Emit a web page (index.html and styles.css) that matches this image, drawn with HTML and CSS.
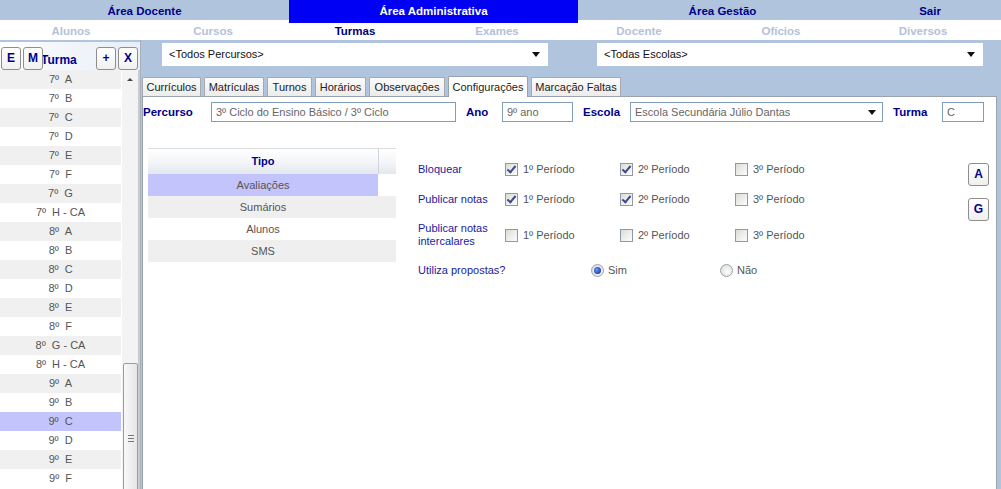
FILE: index.html
```html
<!DOCTYPE html>
<html lang="pt">
<head>
<meta charset="utf-8">
<title>Turmas - Configurações</title>
<link rel="stylesheet" href="styles.css">
</head>
<body>
<div class="nav1">
  <div class="n1">Área Docente</div>
  <div class="n1 active">Área Administrativa</div>
  <div class="n1">Área Gestão</div>
  <div class="n1">Sair</div>
</div>
<div class="nav2">
  <div class="n2">Alunos</div>
  <div class="n2">Cursos</div>
  <div class="n2 cur">Turmas</div>
  <div class="n2">Exames</div>
  <div class="n2">Docente</div>
  <div class="n2">Ofícios</div>
  <div class="n2">Diversos</div>
</div>
<div class="main">
  <aside class="side">
    <div class="side-head">
      <span class="sbtn">E</span><span class="sbtn m">M</span><span class="side-title">Turma</span>
      <span class="sbtn plus">+</span><span class="sbtn">X</span>
    </div>
    <div class="side-body">
      <ul class="list">
        <li>7º&nbsp; A</li><li>7º&nbsp; B</li><li>7º&nbsp; C</li><li>7º&nbsp; D</li>
        <li>7º&nbsp; E</li><li>7º&nbsp; F</li><li>7º&nbsp; G</li><li>7º&nbsp; H - CA</li>
        <li>8º&nbsp; A</li><li>8º&nbsp; B</li><li>8º&nbsp; C</li><li>8º&nbsp; D</li>
        <li>8º&nbsp; E</li><li>8º&nbsp; F</li><li>8º&nbsp; G - CA</li><li>8º&nbsp; H - CA</li>
        <li>9º&nbsp; A</li><li>9º&nbsp; B</li><li class="sel-row">9º&nbsp; C</li><li>9º&nbsp; D</li>
        <li>9º&nbsp; E</li><li>9º&nbsp; F</li>
      </ul>
      <div class="vscroll">
        <div class="arrow-up"></div>
        <div class="thumb"><span class="grip"></span></div>
      </div>
    </div>
  </aside>
  <section class="content">
    <div class="filters">
      <div class="fsel">&lt;Todos Percursos&gt;<span class="caret"></span></div>
      <div class="fsel">&lt;Todas Escolas&gt;<span class="caret"></span></div>
    </div>
    <div class="tabs">
      <div class="tab t1">Currículos</div>
      <div class="tab t2">Matrículas</div>
      <div class="tab t3">Turnos</div>
      <div class="tab t4">Horários</div>
      <div class="tab t5">Observações</div>
      <div class="tab t6 active">Configurações</div>
      <div class="tab t7">Marcação Faltas</div>
    </div>
    <div class="panel">
      <div class="form-row">
        <span class="flbl">Percurso</span>
        <span class="finput">3º Ciclo do Ensino Básico / 3º Ciclo</span>
        <span class="flbl pad">Ano</span>
        <span class="finput">9º ano</span>
        <span class="flbl pad">Escola</span>
        <span class="finput">Escola Secundária Júlio Dantas<span class="caret"></span></span>
        <span class="flbl pad">Turma</span>
        <span class="finput">C</span>
      </div>
      <div class="cfg-area">
        <div class="tipo">
          <div class="tipo-head"><span class="th1">Tipo</span><span class="th2"></span></div>
          <div class="trow"><span class="tc selected">Avaliações</span><span class="tc2"></span></div>
          <div class="trow alt"><span class="tc">Sumários</span><span class="tc2"></span></div>
          <div class="trow"><span class="tc">Alunos</span><span class="tc2"></span></div>
          <div class="trow alt"><span class="tc">SMS</span><span class="tc2"></span></div>
        </div>
        <div class="cfg">
          <div class="crow r1">
            <span class="clbl">Bloquear</span>
            <span class="opt"><span class="cb on"></span>1º Período</span>
            <span class="opt"><span class="cb on"></span>2º Período</span>
            <span class="opt"><span class="cb"></span>3º Período</span>
          </div>
          <div class="crow r2">
            <span class="clbl">Publicar notas</span>
            <span class="opt"><span class="cb on"></span>1º Período</span>
            <span class="opt"><span class="cb on"></span>2º Período</span>
            <span class="opt"><span class="cb"></span>3º Período</span>
          </div>
          <div class="crow r3">
            <span class="clbl">Publicar notas intercalares</span>
            <span class="opt"><span class="cb"></span>1º Período</span>
            <span class="opt"><span class="cb"></span>2º Período</span>
            <span class="opt"><span class="cb"></span>3º Período</span>
          </div>
          <div class="rrow">
            <span class="rlbl">Utiliza propostas?</span>
            <span class="ropt"><span class="rb on"></span>Sim</span>
            <span class="ropt"><span class="rb"></span>Não</span>
          </div>
        </div>
        <div class="ag">
          <span class="abtn">A</span>
          <span class="abtn">G</span>
        </div>
      </div>
    </div>
  </section>
</div>
</body>
</html>
```
FILE: styles.css
```css
* { box-sizing: border-box; }
html, body { margin: 0; padding: 0; }
body {
  width: 1001px;
  height: 489px;
  overflow: hidden;
  background: #b0c4de;
  font-family: "Liberation Sans", Arial, sans-serif;
  font-size: 11px;
  color: #333;
}

/* top navigation */
.nav1 {
  display: grid;
  grid-template-columns: 289px 289px 289px 126px;
  height: 20px;
  background: #b0c4de;
}
.n1 {
  text-align: center;
  line-height: 23px;
  font-weight: bold;
  font-size: 11.5px;
  color: #00008b;
}
.n1.active { background: #0000f4; color: #fff; }

.nav2 {
  display: grid;
  grid-template-columns: repeat(7, 142px);
  height: 20px;
  background: #fff;
}
.n2 {
  text-align: center;
  line-height: 23px;
  font-weight: bold;
  font-size: 11.5px;
  color: #b3c2d8;
}
.n2.cur { color: #000080; }

/* main area */
.main {
  display: flex;
  height: 449px;
}

.side {
  width: 141px;
  display: flex;
  flex-direction: column;
  padding-top: 2px;
  border-right: 1px solid #a8b0bc;
  background: #b0c4de;
}
.side-head {
  height: 28px;
  display: flex;
  align-items: flex-start;
  padding: 5px 0 0 1px;
  background: linear-gradient(to right, #ffffff 0%, #f4f7fb 40%, #e8eef7 100%);
}
.sbtn {
  position: relative;
  z-index: 1;
  width: 20px;
  height: 23px;
  margin-right: 2px;
  border: 1px solid #8e8e8e;
  border-radius: 3px;
  background: linear-gradient(#ffffff, #f1f1f1);
  color: #00008b;
  font-weight: bold;
  font-size: 12px;
  line-height: 21px;
  text-align: center;
}
.sbtn.plus { margin-left: auto; }
.side-title {
  margin-left: -4px;
  color: #00008b;
  font-weight: bold;
  font-size: 12px;
  line-height: 26px;
  width: 50px;
}

.side-body {
  flex: 1;
  display: flex;
  background: #fff;
}
.list {
  list-style: none;
  margin: 0;
  padding: 0;
  width: 121px;
}
.list li {
  height: 19px;
  line-height: 19px;
  text-align: center;
  color: #555;
  font-size: 11px;
}
.list li:nth-child(odd) { background: #f0f0f0; }
.list li.sel-row { background: #c4c4fc; }

.vscroll {
  width: 19px;
  position: relative;
  background: #f3f3f3;
  border-left: 1px solid #fff;
  border-right: 2px solid #c8ccd2;
}
.arrow-up {
  position: absolute;
  top: 8px;
  left: 5px;
  width: 0;
  height: 0;
  border-left: 3px solid transparent;
  border-right: 3px solid transparent;
  border-bottom: 3px solid #444;
}
.thumb {
  position: absolute;
  top: 293px;
  left: 1px;
  width: 15px;
  bottom: -2px;
  border: 1px solid #9c9c9c;
  border-radius: 2px;
  background: linear-gradient(to right, #f8f8f8, #e6e6e6);
}
.grip {
  position: absolute;
  top: 71px;
  left: 4px;
  width: 6px;
  height: 7px;
  border-top: 1px solid #777;
  border-bottom: 1px solid #777;
}
.grip::after {
  content: "";
  position: absolute;
  left: 0;
  top: 2px;
  width: 6px;
  border-top: 1px solid #777;
}

/* content */
.content {
  flex: 1;
  display: flex;
  flex-direction: column;
  padding-left: 1px;
}
.filters {
  display: flex;
  gap: 49px;
  padding: 3px 0 0 20px;
  height: 37px;
}
.fsel {
  position: relative;
  width: 386px;
  height: 23px;
  background: #fff;
  color: #111;
  line-height: 23px;
  padding-left: 7px;
}
.caret {
  position: absolute;
  right: 8px;
  top: 9px;
  width: 0;
  height: 0;
  border-left: 4px solid transparent;
  border-right: 4px solid transparent;
  border-top: 5px solid #111;
}

.tabs {
  display: flex;
  align-items: flex-end;
  gap: 3px;
  height: 19px;
  position: relative;
  z-index: 1;
}
.tab {
  height: 19px;
  line-height: 18px;
  text-align: center;
  white-space: nowrap;
  color: #222;
  border: 1px solid #a6aab0;
  border-bottom: none;
  border-radius: 2px 2px 0 0;
  background: linear-gradient(#fbfbfb, #ececea);
}
.t1 { width: 59px; }
.t2 { width: 60px; }
.t3 { width: 45px; }
.t4 { width: 51px; }
.t5 { width: 76px; }
.t6 { width: 80px; }
.t7 { width: 90px; }
.tab.active {
  height: 21px;
  line-height: 21px;
  background: #fff;
  border-color: #9aa0a8;
  margin-bottom: -1px;
}

.panel {
  flex: 1;
  margin-right: 4px;
  background: #fff;
  border: 1px solid #9aa2ac;
  border-bottom: none;
}

.form-row {
  display: grid;
  grid-template-columns: 68px 245px 46px 71px 57px 253px 59px 42px;
  align-items: center;
  margin-top: 5px;
  height: 20px;
}
.flbl {
  color: #00008b;
  font-weight: bold;
  font-size: 11.5px;
}
.flbl.pad { padding-left: 10px; }
.finput {
  position: relative;
  height: 20px;
  border: 1px solid #7f9db9;
  color: #666;
  line-height: 18px;
  padding-left: 4px;
  white-space: nowrap;
}
.finput .caret { top: 7px; right: 6px; }

.cfg-area {
  display: flex;
  margin-top: 26px;
  padding-left: 5px;
}
.tipo { width: 248px; }
.tipo-head {
  display: flex;
  height: 26px;
  border-top: 1px solid #dcdcdc;
  background: linear-gradient(#ffffff 0%, #f5f7fa 45%, #e3e8ef 100%);
}
.th1 {
  width: 230px;
  text-align: center;
  line-height: 25px;
  color: #00008b;
  font-weight: bold;
}
.th2 {
  flex: 1;
  border-left: 1px solid #cfd4da;
}
.trow {
  display: flex;
  height: 22px;
}
.trow.alt { background: #efefef; }
.tc {
  width: 230px;
  text-align: center;
  line-height: 22px;
  color: #555;
}
.tc.selected { background: #c4c4fc; }
.tc2 { flex: 1; }

.cfg {
  margin-left: 22px;
  padding-top: 12px;
}
.crow {
  display: grid;
  grid-template-columns: 87px 115px 115px 115px;
  align-items: center;
}
.crow.r1 { height: 18px; }
.crow.r2 { height: 18px; margin-top: 12px; }
.crow.r3 { height: 26px; margin-top: 14px; }
.clbl {
  color: #1a1aa0;
  line-height: 13px;
}
.crow.r3 .clbl { padding-right: 14px; }
.opt {
  display: flex;
  align-items: center;
  color: #555;
}
.cb {
  width: 13px;
  height: 13px;
  margin-right: 5px;
  border: 1px solid #8e9aa8;
  background: linear-gradient(135deg, #dcdcd6, #fdfdfd);
  position: relative;
}
.cb.on::after {
  content: "";
  position: absolute;
  left: 3px;
  top: 0px;
  width: 3px;
  height: 7px;
  border-right: 2px solid #3d4b8c;
  border-bottom: 2px solid #3d4b8c;
  transform: rotate(40deg);
}
.rrow {
  display: flex;
  align-items: center;
  height: 18px;
  margin-top: 13px;
}
.rlbl {
  width: 173px;
  color: #1a1aa0;
}
.ropt {
  display: flex;
  align-items: center;
  width: 129px;
  color: #555;
}
.rb {
  width: 13px;
  height: 13px;
  border-radius: 50%;
  margin-right: 4px;
  border: 1px solid #9aa3ae;
  background: radial-gradient(circle at 60% 60%, #fdfdfd, #d6d6d0);
  position: relative;
}
.rb.on::after {
  content: "";
  position: absolute;
  left: 2px;
  top: 2px;
  width: 7px;
  height: 7px;
  border-radius: 50%;
  background: radial-gradient(circle at 40% 40%, #6e9cff, #1c3fb8 70%);
}

.ag {
  margin-left: auto;
  margin-right: 7px;
  padding-top: 15px;
  display: flex;
  flex-direction: column;
  gap: 12px;
}
.abtn {
  width: 21px;
  height: 23px;
  border: 1px solid #8e8e8e;
  border-radius: 3px;
  background: linear-gradient(#ffffff, #f0f0f0);
  color: #00008b;
  font-weight: bold;
  font-size: 12px;
  line-height: 21px;
  text-align: center;
}
```
